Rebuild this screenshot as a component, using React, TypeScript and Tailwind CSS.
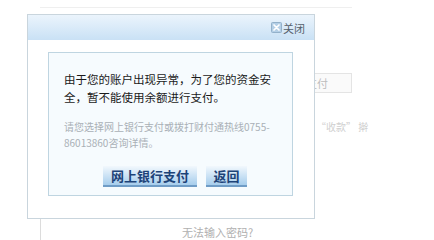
import React from 'react';

const font = { fontFamily: '"Noto Sans CJK SC", "Noto Sans", sans-serif' };

function CloseIcon() {
    return (
        <svg width="11" height="11" viewBox="0 0 11 11" className="mr-[1px]">
            <rect x="0.5" y="0.5" width="10" height="10" rx="1" fill="#b4cfe6" stroke="#93b1ca" />
            <path d="M3 3l5 5M8 3l-5 5" stroke="#ffffff" strokeWidth="1.7" strokeLinecap="round" />
        </svg>
    );
}

export default function App() {
    return (
        <div className="relative w-[434px] h-[240px] bg-white overflow-hidden" style={font}>
            {/* page behind the dialog */}
            <div className="flex flex-col">
                <div className="ml-[40px] w-[312px] h-[8px] border-b border-[#efefef]"></div>
                <div className="mt-[65px] ml-[290px] w-[62px] h-[20px] border border-[#e4e4e4] bg-[#fafafa] flex items-center pl-[15px] text-[11px] text-[#bdbdbd]">
                    支付
                </div>
                <div className="mt-[26px] ml-[316px] text-[10px] leading-[16px] text-[#d0d0d0]">“收款” 擀</div>
                <div className="mt-[83px] ml-[40px] h-[30px] border-l border-[#dcdcdc] flex justify-center pl-[4px] w-[350px]">
                    <span className="mt-[7px] text-[11px] leading-[14px] text-[#b0b0b0]">无法输入密码?</span>
                </div>
            </div>

            {/* dialog */}
            <div className="absolute left-[27px] top-[14px] w-[288px] h-[205px] border border-[#c9d5dd] bg-white">
                <div className="h-[25px] bg-gradient-to-b from-[#ebf4fc] to-[#c9e1f5] flex items-center justify-end pr-[9px]">
                    <CloseIcon />
                    <span className="text-[11px] leading-[12px] text-[#56616c]">关闭</span>
                </div>
                <div className="ml-[20px] mt-[12px] w-[245px] h-[144px] border border-[#bfd5e1] bg-[#f6fbfe] pl-[15px] pt-[17px]">
                    <p className="w-[210px] text-[11.5px] leading-[18px] text-[#1a1a1a]">
                        由于您的账户出现异常，为了您的资金安全，暂不能使用余额进行支付。
                    </p>
                    <p className="mt-[13px] w-[210px] text-[10px] leading-[16px] text-[#a9b0b6]">
                        请您选择网上银行支付或拨打财付通热线0755-86013860咨询详情。
                    </p>
                    <div className="mt-[15px] pl-[39px] flex gap-[9px]">
                        <button className="w-[94px] h-[21px] bg-gradient-to-b from-[#f2f8fd] to-[#a6cdec] border-b-2 border-[#6f9cc6] text-[13px] font-bold text-[#1d4378] leading-[19px]">
                            网上银行支付
                        </button>
                        <button className="w-[41px] h-[21px] bg-gradient-to-b from-[#f2f8fd] to-[#a6cdec] border-b-2 border-[#6f9cc6] text-[13px] font-bold text-[#1d4378] leading-[19px]">
                            返回
                        </button>
                    </div>
                </div>
            </div>
        </div>
    );
}
